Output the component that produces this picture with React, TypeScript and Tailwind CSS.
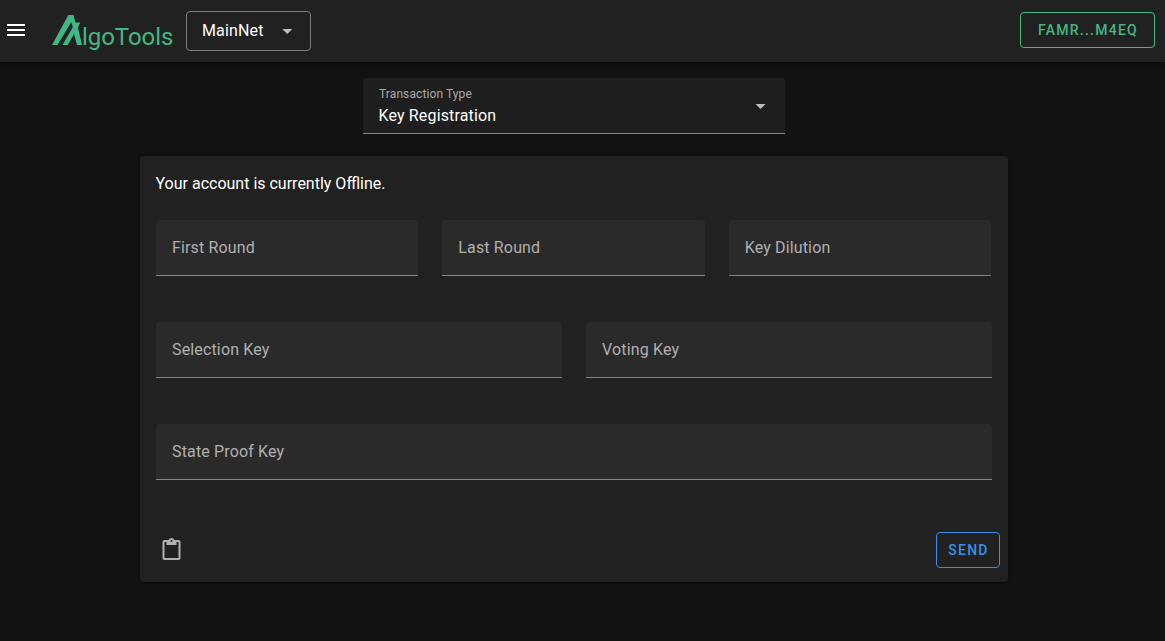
import React from "react";

function Field({ label, className = "" }: { label: string; className?: string }) {
  return (
    <div
      className={`flex h-14 items-center rounded-t border-b border-[#848484] bg-[#2a2a2a] px-4 text-base leading-6 text-[#b0b0b0] ${className}`}
    >
      <span className="tracking-[0.15px]">{label}</span>
    </div>
  );
}

function Caret({ viewBox = "0 0 24 24" }: { viewBox?: string }) {
  return (
    <svg viewBox={viewBox} className="size-6" fill="#bdbdbd">
      <path d="M7 10l5 5 5-5z" />
    </svg>
  );
}

function Logo() {
  return (
    <div className="ml-6 flex h-[62px] w-[121px] shrink-0 items-start text-[#41b883]">
      <svg viewBox="0 0 30 30" className="mt-[15px] h-[30px] w-[30px] shrink-0" fill="currentColor">
        <path d="M16.4 0h5l2 7.5h4.9L26 12.5 30 30h-5l-3-11-6.2 11h-5.3L20.8 12.3l-1.5-5L5.4 30H0z" />
      </svg>
      <span className="mt-[19px] text-2xl leading-9 tracking-[-0.05px]">lgoTools</span>
    </div>
  );
}

export default function App() {
  return (
    <div className="h-[641px] overflow-hidden bg-[#121212] font-['Roboto',sans-serif] text-white">
      <header className="flex h-[62px] items-center bg-[#212121] shadow-[0_2px_4px_-1px_rgba(0,0,0,0.2),0_4px_5px_rgba(0,0,0,0.14),0_1px_10px_rgba(0,0,0,0.12)]">
        <svg viewBox="0 0 24 24" className="mb-0.5 ml-1 size-6 shrink-0" fill="white">
          <path d="M3 6h18v2H3zM3 11h18v2H3zM3 16h18v2H3z" />
        </svg>
        <Logo />
        <button className="ml-[13px] flex h-10 w-[125px] shrink-0 items-center rounded border border-[#7c7c7c] pl-[15px] text-base tracking-[0.15px]">
          <span className="w-[73px] text-left">MainNet</span>
          <Caret viewBox="-0.3 0 24 24" />
        </button>
        <button className="mr-[10px] mb-0.5 ml-auto h-9 w-[135px] shrink-0 rounded border border-[#41b883] pl-[1px] text-sm font-medium tracking-[1.25px] text-[#41b883]">
          FAMR...M4EQ
        </button>
      </header>
      <main className="pt-4">
        <div className="ml-[363px] flex h-14 w-[422px] items-center justify-between rounded-t border-b border-[#848484] bg-[#1e1e1e] pr-3 pl-4">
          <div className="pt-[3px]">
            <div className="text-xs leading-4 tracking-[0.1px] text-[#aaaaaa]">Transaction Type</div>
            <div className="mt-0.5 -ml-[0.5px] text-base leading-6 tracking-[0.15px]">Key Registration</div>
          </div>
          <Caret viewBox="0.5 0 24 24" />
        </div>
        <section className="mt-[22px] ml-[140px] flex h-[426px] w-[868px] flex-col rounded bg-[#212121] px-4 pt-4 shadow-[0_3px_1px_-2px_rgba(0,0,0,0.2),0_2px_2px_rgba(0,0,0,0.14),0_1px_5px_rgba(0,0,0,0.12)]">
          <p className="-ml-[0.5px] text-base leading-6">Your account is currently Offline.</p>
          <div className="mt-6 mr-px grid grid-cols-3 gap-6">
            <Field label="First Round" />
            <Field label="Last Round" />
            <Field label="Key Dilution" />
          </div>
          <div className="mt-[46px] grid grid-cols-2 gap-6">
            <Field label="Selection Key" />
            <Field label="Voting Key" />
          </div>
          <Field label="State Proof Key" className="mt-[46px]" />
          <div className="mt-[52px] -mr-2 flex h-9 items-center justify-between">
            <svg viewBox="-0.5 0 24 24" className="ml-[3px] size-6" fill="#b0b0b0">
              <path d="M19,20H5V4H7V7H17V4H19M12,2A1,1 0 0,1 13,3A1,1 0 0,1 12,4A1,1 0 0,1 11,3A1,1 0 0,1 12,2M19,2H14.82C14.4,0.84 13.3,0 12,0C10.7,0 9.6,0.84 9.18,2H5A2,2 0 0,0 3,4V20A2,2 0 0,0 5,22H19A2,2 0 0,0 21,20V4A2,2 0 0,0 19,2Z" />
            </svg>
            <button className="h-9 w-16 rounded border border-[#3490ef] pl-[1px] text-sm font-medium tracking-[1.25px] text-[#3490ef]">
              SEND
            </button>
          </div>
        </section>
      </main>
    </div>
  );
}
